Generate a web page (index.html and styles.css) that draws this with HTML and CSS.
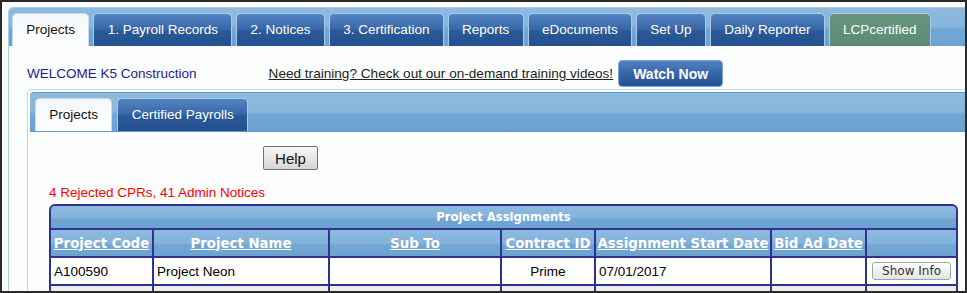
FILE: index.html
```html
<!DOCTYPE html>
<html lang="en">
<head>
    <meta charset="UTF-8">
    <title>Projects</title>
    <link rel="stylesheet" href="styles.css">
</head>
<body>
<div class="page">
    <div class="main-panel">
        <div class="tab-bar">
            <a href="#projects" class="tab active">Projects</a>
            <a href="#payroll" class="tab">1. Payroll Records</a>
            <a href="#notices" class="tab">2. Notices</a>
            <a href="#cert" class="tab">3. Certification</a>
            <a href="#reports" class="tab">Reports</a>
            <a href="#edocs" class="tab">eDocuments</a>
            <a href="#setup" class="tab">Set Up</a>
            <a href="#daily" class="tab">Daily Reporter</a>
            <a href="#lcp" class="tab green">LCPcertified</a>
        </div>

        <div class="main-body">
            <div class="welcome-row">
                <span class="welcome">WELCOME K5 Construction</span>
                <a href="#training" class="training">Need training? Check out our on-demand training videos!</a>
                <button class="watch-btn">Watch Now</button>
            </div>

            <!-- Inner tabs -->
            <div class="sub-panel">
                <div class="tab-bar sub-bar">
                    <a href="#projects" class="tab active">Projects</a>
                    <a href="#cprs" class="tab">Certified Payrolls</a>
                </div>
                <div class="sub-body">
                    <div class="help-row">
                        <button class="help-btn">Help</button>
                    </div>
                    <div class="alerts">4 Rejected CPRs, 41 Admin Notices</div>

                    <table class="assign">
                        <colgroup>
                            <col class="c-code">
                            <col class="c-name">
                            <col class="c-sub">
                            <col class="c-contract">
                            <col class="c-start">
                            <col class="c-bid">
                            <col class="c-info">
                        </colgroup>
                        <tr>
                            <th colspan="7" class="title">Project Assignments</th>
                        </tr>
                        <tr class="head">
                            <th><a href="#code">Project Code</a></th>
                            <th><a href="#name">Project Name</a></th>
                            <th><a href="#sub">Sub To</a></th>
                            <th><a href="#contract">Contract ID</a></th>
                            <th><a href="#start">Assignment Start Date</a></th>
                            <th><a href="#bid">Bid Ad Date</a></th>
                            <th></th>
                        </tr>
                        <tr>
                            <td>A100590</td>
                            <td>Project Neon</td>
                            <td></td>
                            <td class="center">Prime</td>
                            <td>07/01/2017</td>
                            <td></td>
                            <td class="center"><button class="info-btn">Show Info</button></td>
                        </tr>
                        <tr class="alt">
                            <td>&nbsp;</td>
                            <td></td>
                            <td></td>
                            <td></td>
                            <td></td>
                            <td></td>
                            <td></td>
                        </tr>
                    </table>
                </div>
            </div>
        </div>
    </div>
</div>
</body>
</html>
```

FILE: styles.css
```css
body {
    margin: 0;
    font-family: "Liberation Sans", Arial, sans-serif;
    background-color: #fff;
}

.page {
    width: 967px;
    height: 293px;
    box-sizing: border-box;
    border: 2px solid #2a2a2a;
    padding: 5px 0 0 6px;
    overflow: hidden;
    background-color: #fff;
}

.main-panel {
    border: 1px solid #a9cbe8;
    border-right: none;
    border-radius: 5px 0 0 0;
    background-color: #fdfefe;
    height: 400px;
}

/* blue tab strip */
.tab-bar {
    display: flex;
    gap: 4px;
    padding: 5px 3px 0 3px;
    border-radius: 4px 0 0 0;
    background: linear-gradient(#8dbbdf 0%, #88b6dc 48%, #72a7d3 56%, #6ca2d0 100%);
}

.tab {
    height: 32px;
    line-height: 32px;
    padding: 0 13.3px;
    border: 1px solid #a9c9e6;
    border-bottom: none;
    border-radius: 5px 5px 0 0;
    font-size: 13.5px;
    color: #fff;
    text-decoration: none;
    background: linear-gradient(#5384c3 0%, #3a69aa 45%, #2b5898 55%, #24508e 100%);
}

.tab.active {
    color: #111;
    background: linear-gradient(#f4f8fb, #ffffff);
    border-color: #c6dcef;
}

.tab.green {
    background: linear-gradient(#67957f, #5b8b73);
}

.main-body {
    padding: 14px 0 0 18px;
}

.welcome-row {
    display: flex;
    align-items: center;
    height: 27px;
}

.welcome {
    font-size: 13.5px;
    color: #1c1c8e;
}

.training {
    margin-left: 72px;
    font-size: 13.6px;
    color: #222;
}

.watch-btn {
    margin-left: 5px;
    height: 27px;
    padding: 0 14px;
    border: 1px solid #7fa5d4;
    border-radius: 4px;
    font-family: "Liberation Sans", Arial, sans-serif;
    font-size: 14px;
    font-weight: bold;
    color: #fff;
    background: linear-gradient(#5181c1 0%, #3766a8 50%, #23508f 100%);
}

.sub-panel {
    margin-top: 2px;
    border: 1px solid #bcd6ee;
    border-right: none;
    border-radius: 5px 0 0 0;
    padding: 2px 0 0 2px;
    height: 400px;
}

.sub-bar {
    gap: 5px;
    padding: 5px 5px 0 5px;
    border-top: 1px solid #5b9bd6;
    border-bottom: 1px solid #5b9bd6;
    border-radius: 4px 0 0 0;
}

.sub-body {
    padding-left: 19px;
}

.help-row {
    padding: 14px 0 0 214px;
}

.help-btn {
    width: 55px;
    height: 24px;
    border: 1px solid #727272;
    border-radius: 2px;
    font-family: "Liberation Sans", Arial, sans-serif;
    font-size: 15px;
    color: #111;
    background: linear-gradient(#f6f6f6, #d6d6d6);
}

.alerts {
    margin-top: 15px;
    font-size: 13.5px;
    color: #f00;
}

/* assignments grid */
.assign {
    margin-top: 4px;
    width: 909px;
    table-layout: fixed;
    border-collapse: separate;
    border-spacing: 0;
}

.c-code { width: 105px; }
.c-name { width: 176px; }
.c-sub { width: 172px; }
.c-contract { width: 94px; }
.c-start { width: 176px; }
.c-bid { width: 95px; }
.c-info { width: 91px; }

.assign th,
.assign td {
    border-right: 2px solid #2f3290;
    border-bottom: 2px solid #2f3290;
    padding: 0 3px;
}

.assign tr > :first-child {
    border-left: 2px solid #2f3290;
}

.assign th {
    height: 26px;
    padding: 0 1px;
    white-space: nowrap;
    font-family: "DejaVu Sans", Verdana, sans-serif;
    font-size: 13.3px;
    font-weight: bold;
    color: #fff;
    background: linear-gradient(#8cbadf 0%, #84b3da 50%, #71a6d3 60%, #6ca2d0 100%);
}

.assign th.title {
    height: 22px;
    border-top: 2px solid #2f3290;
    border-radius: 6px 6px 0 0;
    font-size: 11.6px;
}

.assign th a {
    color: #fff;
}

.assign td {
    height: 26px;
    font-size: 13.5px;
    color: #000;
    background-color: #fff;
}

.assign td.center {
    text-align: center;
}

.assign tr.alt td {
    background-color: #ededed;
}

.info-btn {
    height: 18px;
    padding: 0 9px;
    border: 1px solid #a2a2a2;
    border-radius: 3px;
    font-family: "DejaVu Sans", Verdana, sans-serif;
    font-size: 12px;
    color: #333;
    background: linear-gradient(#ffffff, #e4e4e4);
}
```
